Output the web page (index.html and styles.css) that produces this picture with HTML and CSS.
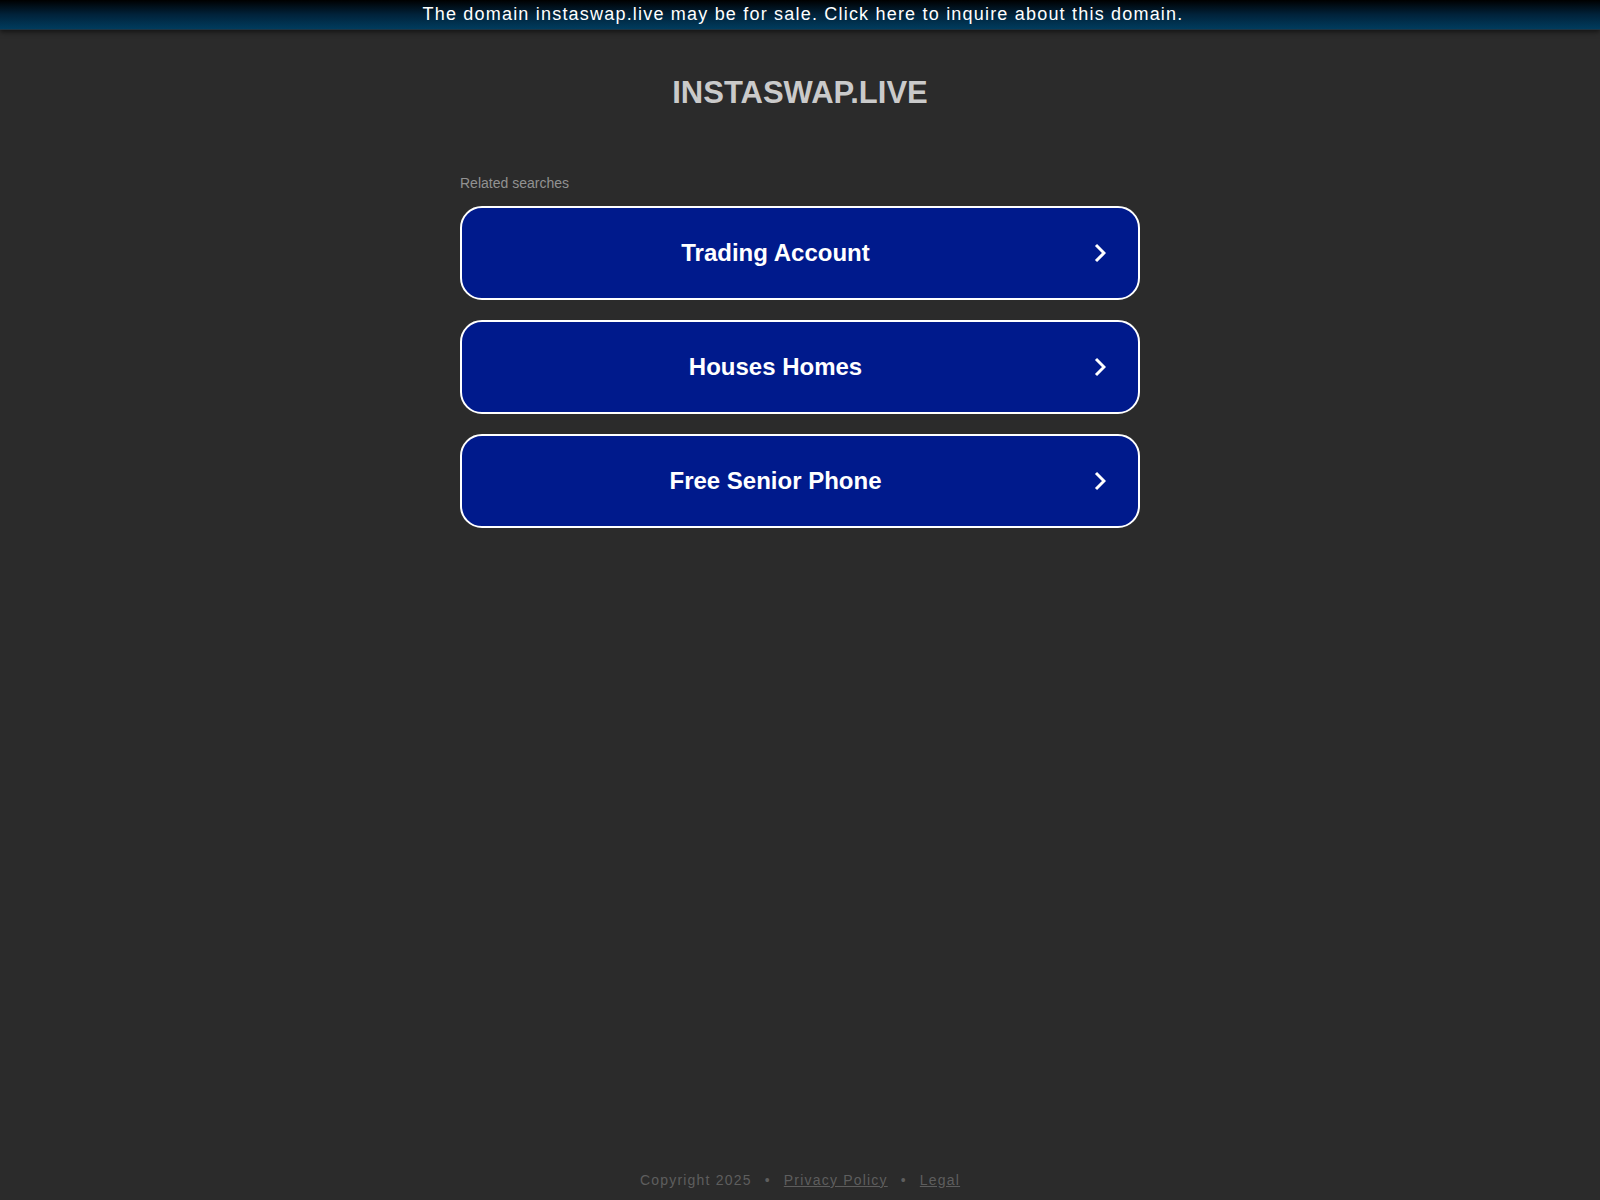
FILE: index.html
```html
<!DOCTYPE html>
<html lang="en">
<head>
<meta charset="utf-8">
<title>instaswap.live</title>
<link rel="stylesheet" href="styles.css">
</head>
<body>
<div class="page">
  <a class="announce" href="#">The domain instaswap.live may be for sale. Click here to inquire about this domain.</a>
  <h1 class="domain">INSTASWAP.LIVE</h1>
  <main class="content">
    <p class="related">Related searches</p>
    <ul class="links">
      <li><a class="link" href="#"><span class="label">Trading Account</span><svg class="chev" viewBox="0 0 12 20" width="12" height="20"><polyline points="2,2 10,10 2,18" fill="none" stroke="#fff" stroke-width="3"/></svg></a></li>
      <li><a class="link" href="#"><span class="label">Houses Homes</span><svg class="chev" viewBox="0 0 12 20" width="12" height="20"><polyline points="2,2 10,10 2,18" fill="none" stroke="#fff" stroke-width="3"/></svg></a></li>
      <li><a class="link" href="#"><span class="label">Free Senior Phone</span><svg class="chev" viewBox="0 0 12 20" width="12" height="20"><polyline points="2,2 10,10 2,18" fill="none" stroke="#fff" stroke-width="3"/></svg></a></li>
    </ul>
  </main>
  <footer class="footer">
    <span>Copyright 2025</span><span class="dot">•</span><a href="#">Privacy Policy</a><span class="dot">•</span><a href="#">Legal</a>
  </footer>
</div>
</body>
</html>
```
FILE: styles.css
```css
html, body {
  margin: 0;
  padding: 0;
  background: #2b2b2b;
}
body {
  font-family: "Liberation Sans", Arial, sans-serif;
}
.page {
  min-height: 100vh;
  display: flex;
  flex-direction: column;
  align-items: center;
}
.announce {
  align-self: stretch;
  display: block;
  height: 29px;
  padding-left: 6px;
  line-height: 28px;
  text-align: center;
  font-size: 18px;
  letter-spacing: 1.2px;
  color: #fff;
  text-decoration: none;
  background: linear-gradient(to bottom, #000 0%, #01223a 50%, #003c5e 100%);
  border-bottom: 1px solid #1c3444;
  box-shadow: 0 2px 5px rgba(0, 0, 0, 0.55);
}
.domain {
  margin: 45px 0 0;
  font-size: 31px;
  line-height: 36px;
  font-weight: bold;
  color: #cacaca;
}
.content {
  width: 680px;
  margin-top: 64px;
}
.related {
  margin: 0 0 15px;
  font-size: 14px;
  line-height: 16px;
  color: #929292;
}
.links {
  list-style: none;
  margin: 0;
  padding: 0;
  display: flex;
  flex-direction: column;
  gap: 20px;
}
.link {
  display: flex;
  align-items: center;
  gap: 5px;
  height: 90px;
  padding-right: 32px;
  border: 2px solid #fff;
  border-radius: 22px;
  background: #001a8c;
  color: #fff;
  text-decoration: none;
}
.label {
  flex: 1;
  text-align: center;
  font-size: 24px;
  font-weight: bold;
}
.chev {
  display: block;
  flex: none;
}
.footer {
  margin-top: auto;
  padding-bottom: 10px;
  font-size: 14px;
  line-height: 20px;
  letter-spacing: 1.2px;
  color: #5e5e5e;
}
.footer a {
  color: #5e5e5e;
}
.dot {
  margin: 0 13px;
}
```
